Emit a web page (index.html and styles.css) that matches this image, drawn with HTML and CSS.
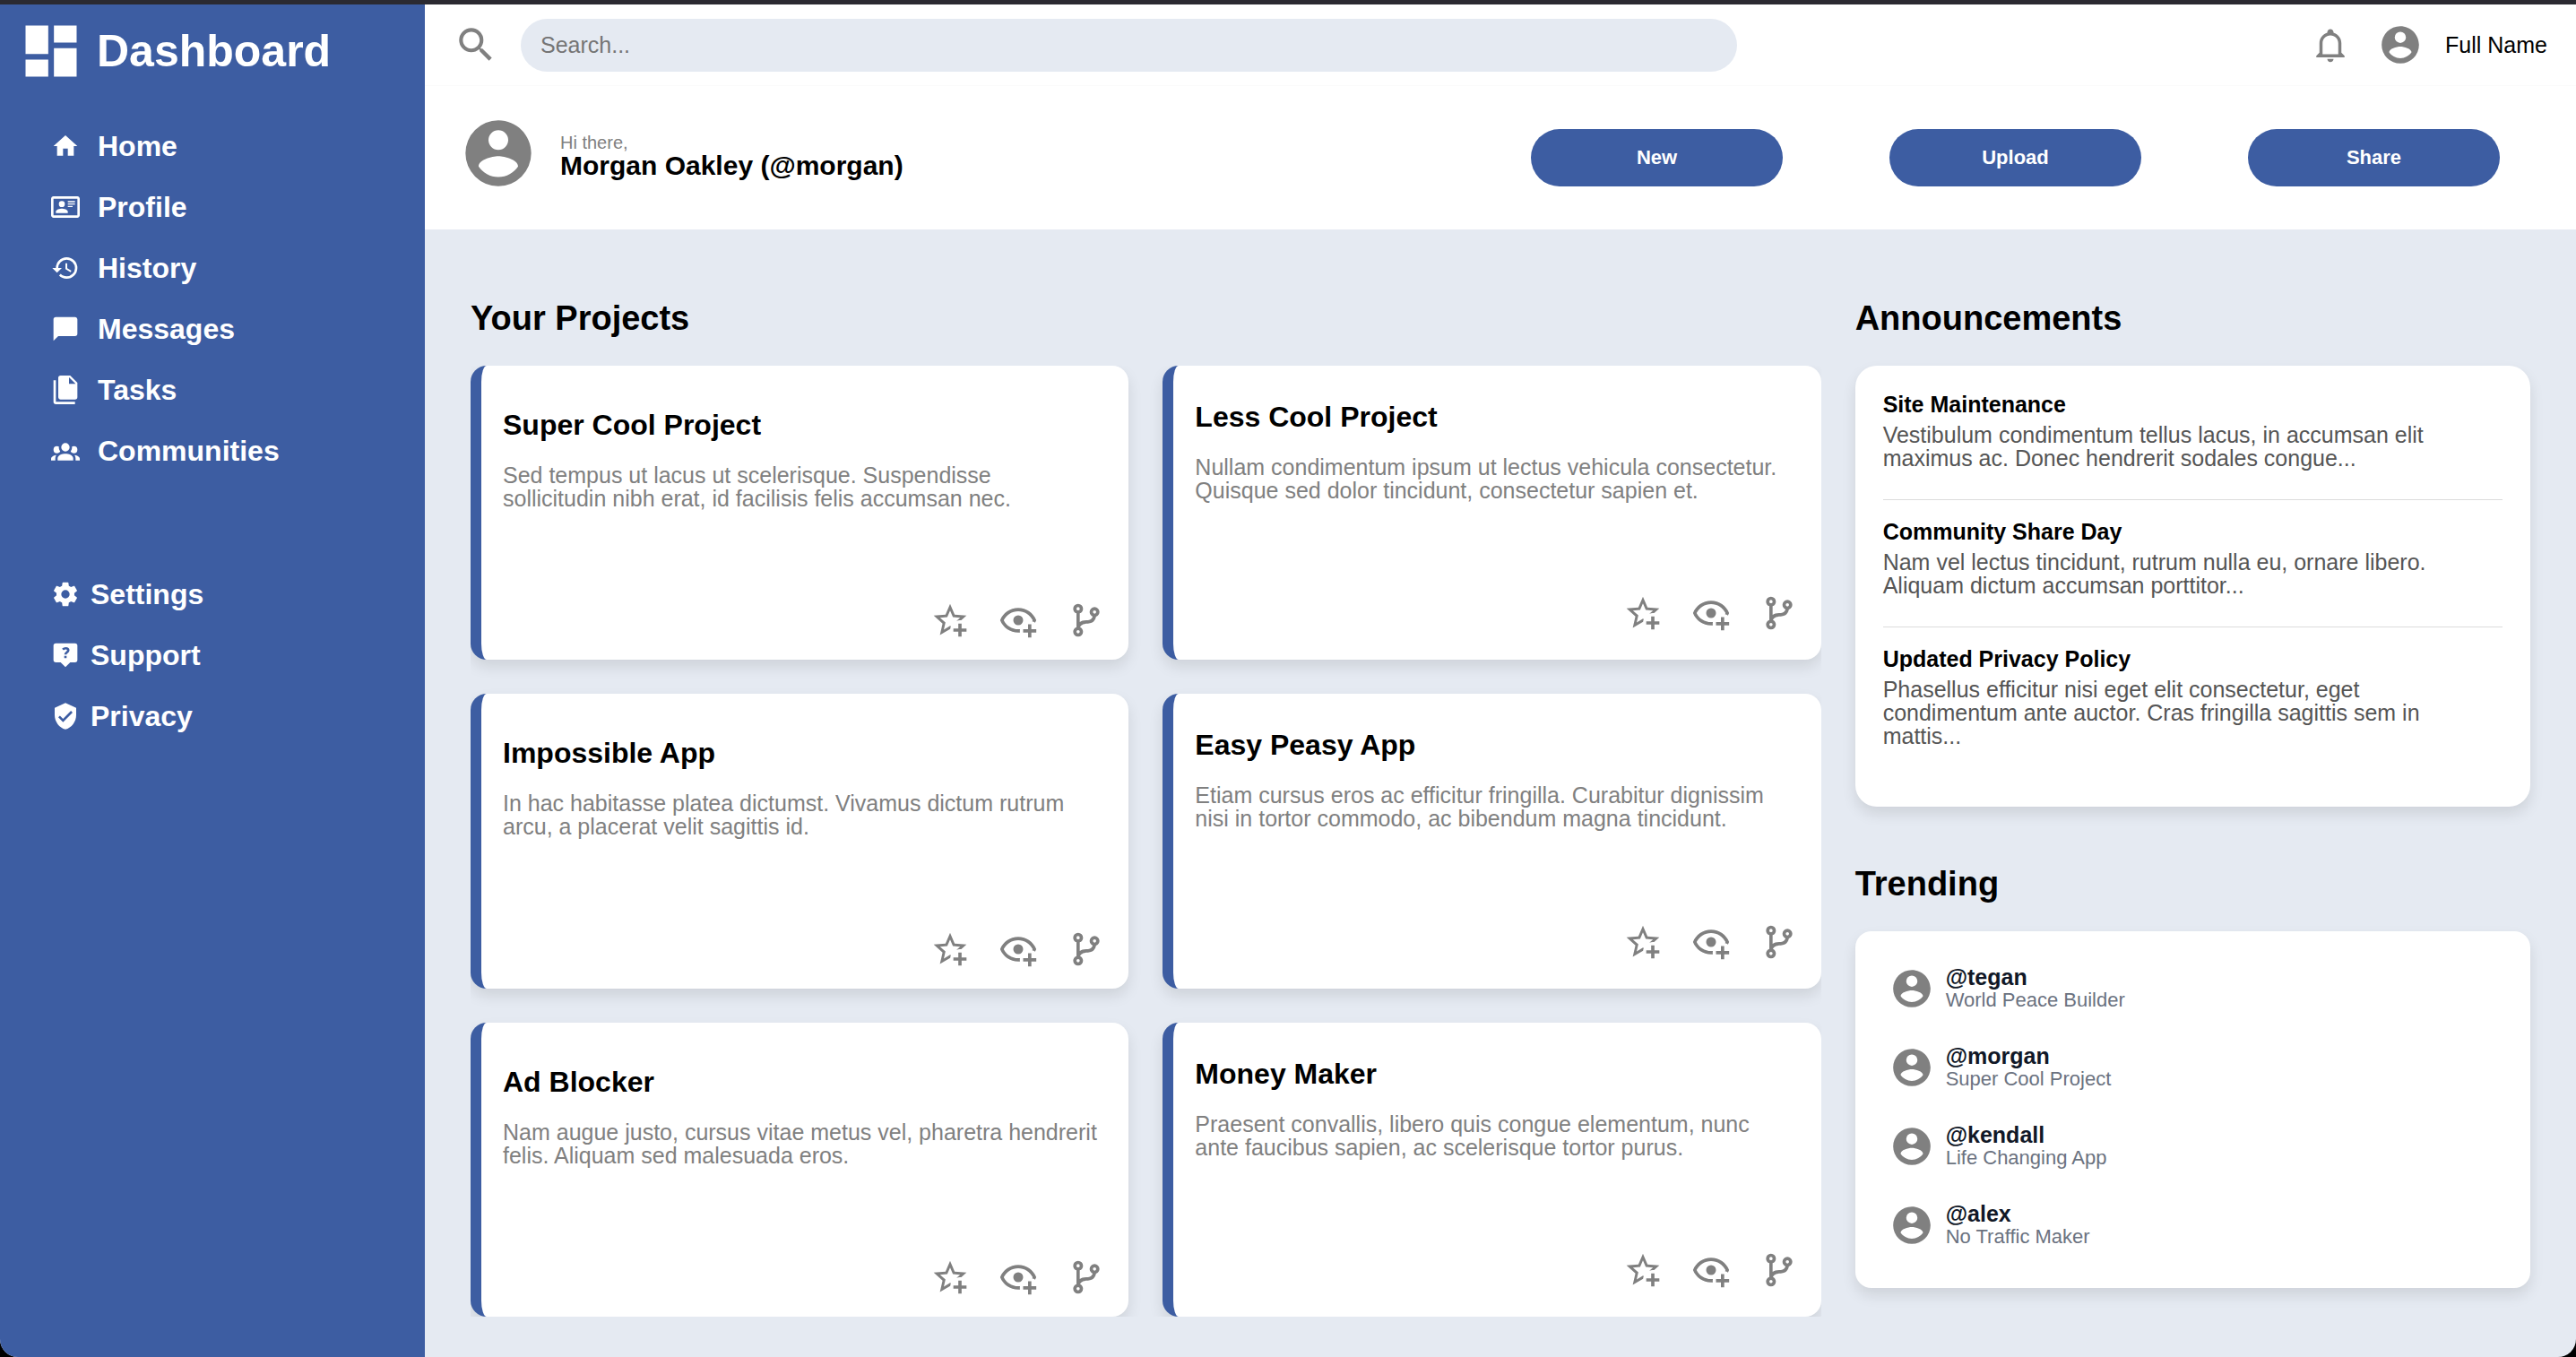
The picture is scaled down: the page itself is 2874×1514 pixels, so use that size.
FILE: index.html
```html
<!DOCTYPE html>
<html lang="en">
<head>
<meta charset="utf-8">
<meta name="viewport" content="width=device-width, initial-scale=1">
<title>Dashboard</title>
<link rel="stylesheet" href="styles.css">
</head>
<body>
<svg class="sprite" aria-hidden="true">
  <symbol id="i-account" viewBox="0 0 24 24"><path d="M12,19.2C9.5,19.2 7.29,17.92 6,16C6.03,14 10,12.9 12,12.9C14,12.9 17.97,14 18,16C16.71,17.92 14.5,19.2 12,19.2M12,5A3,3 0 0,1 15,8A3,3 0 0,1 12,11A3,3 0 0,1 9,8A3,3 0 0,1 12,5M12,2A10,10 0 0,0 2,12A10,10 0 0,0 12,22A10,10 0 0,0 22,12C22,6.47 17.5,2 12,2Z"/></symbol>
  <symbol id="i-star" viewBox="0 0 24 24"><path d="M5.8 21L7.4 14L2 9.2L9.2 8.6L12 2L14.8 8.6L22 9.2L18.8 12H18C17.3 12 16.6 12.1 15.9 12.4L18.1 10.5L13.7 10.1L12 6.1L10.3 10.1L5.9 10.5L9.2 13.4L8.2 17.7L12 15.4L12.5 15.7C12.3 16.2 12.1 16.8 12.1 17.3L5.8 21M17 14V17H14V19H17V22H19V19H22V17H19V14H17Z"/></symbol>
  <symbol id="i-eye" viewBox="0 0 24 24"><path d="M12,4.5C7,4.5 2.73,7.61 1,12C2.73,16.39 7,19.5 12,19.5C12.36,19.5 12.72,19.5 13.08,19.45C13.03,19.13 13,18.82 13,18.5C13,18.14 13.04,17.78 13.1,17.42C12.74,17.46 12.37,17.5 12,17.5C8.24,17.5 4.83,15.36 3.18,12C4.83,8.64 8.24,6.5 12,6.5C15.76,6.5 19.17,8.64 20.82,12C20.7,12.24 20.56,12.45 20.43,12.68C21.09,12.84 21.72,13.11 22.29,13.5C22.56,13 22.8,12.5 23,12C21.27,7.61 17,4.5 12,4.5M12,9A3,3 0 0,0 9,12A3,3 0 0,0 12,15A3,3 0 0,0 15,12A3,3 0 0,0 12,9M18,14.5V17.5H15V19.5H18V22.5H20V19.5H23V17.5H20V14.5H18Z"/></symbol>
  <symbol id="i-branch" viewBox="0 0 24 24"><path d="M13,14C9.64,14 8.54,15.35 8.18,16.24C9.25,16.7 10,17.76 10,19A3,3 0 0,1 7,22A3,3 0 0,1 4,19C4,17.69 4.83,16.58 6,16.17V7.83C4.83,7.42 4,6.31 4,5A3,3 0 0,1 7,2A3,3 0 0,1 10,5C10,6.31 9.17,7.42 8,7.83V13.12C8.88,12.47 10.16,12 12,12C14.67,12 15.56,10.66 15.85,9.77C14.77,9.32 14,8.25 14,7A3,3 0 0,1 17,4A3,3 0 0,1 20,7C20,8.34 19.12,9.5 17.91,9.86C17.65,11.29 16.68,14 13,14M7,18A1,1 0 0,0 6,19A1,1 0 0,0 7,20A1,1 0 0,0 8,19A1,1 0 0,0 7,18M7,4A1,1 0 0,0 6,5A1,1 0 0,0 7,6A1,1 0 0,0 8,5A1,1 0 0,0 7,4M17,6A1,1 0 0,0 16,7A1,1 0 0,0 17,8A1,1 0 0,0 18,7A1,1 0 0,0 17,6Z"/></symbol>
</svg>

<aside class="sidebar">
  <div class="brand">
    <svg class="icon icon-brand" viewBox="0 0 24 24" aria-hidden="true"><path d="M13,3V9H21V3M13,21H21V11H13M3,21H11V15H3M3,13H11V3H3V13Z"/></svg>
    <h1 class="brand-name">Dashboard</h1>
  </div>
  <nav class="nav" aria-label="Main">
    <a class="nav-link" href="#home"><svg class="icon icon-nav" viewBox="0 0 24 24" aria-hidden="true"><path d="M10,20V14H14V20H19V12H22L12,3L2,12H5V20H10Z"/></svg>Home</a>
    <a class="nav-link" href="#profile"><svg class="icon icon-nav" viewBox="0 0 24 24" aria-hidden="true"><path d="M22,3H2C0.91,3.04 0.04,3.91 0,5V19C0.04,20.09 0.91,20.96 2,21H22C23.09,20.96 23.96,20.09 24,19V5C23.96,3.91 23.09,3.04 22,3M22,19H2V5H22V19M14,17V15.75C14,14.09 10.66,13.25 9,13.25C7.34,13.25 4,14.09 4,15.75V17H14M9,7A2.5,2.5 0 0,0 6.5,9.5A2.5,2.5 0 0,0 9,12A2.5,2.5 0 0,0 11.5,9.5A2.5,2.5 0 0,0 9,7M14,7V8H20V7H14M14,9V10H20V9H14M14,11V12H18V11H14"/></svg>Profile</a>
    <a class="nav-link" href="#history"><svg class="icon icon-nav" viewBox="0 0 24 24" aria-hidden="true"><path d="M13.5,8H12V13L16.28,15.54L17,14.33L13.5,12.25V8M13,3A9,9 0 0,0 4,12H1L4.96,16.03L9,12H6A7,7 0 0,1 13,5A7,7 0 0,1 20,12A7,7 0 0,1 13,19C11.07,19 9.32,18.21 8.06,16.94L6.64,18.36C8.27,20 10.5,21 13,21A9,9 0 0,0 22,12A9,9 0 0,0 13,3"/></svg>History</a>
    <a class="nav-link" href="#messages"><svg class="icon icon-nav" viewBox="0 0 24 24" aria-hidden="true"><path d="M20,2H4A2,2 0 0,0 2,4V22L6,18H20A2,2 0 0,0 22,16V4C22,2.89 21.1,2 20,2Z"/></svg>Messages</a>
    <a class="nav-link" href="#tasks"><svg class="icon icon-nav" viewBox="0 0 24 24" aria-hidden="true"><path d="M15,7H20.5L15,1.5V7M8,0H16L22,6V18A2,2 0 0,1 20,20H8C6.89,20 6,19.1 6,18V2A2,2 0 0,1 8,0M4,4V22H20V24H4A2,2 0 0,1 2,22V4H4Z"/></svg>Tasks</a>
    <a class="nav-link" href="#communities"><svg class="icon icon-nav" viewBox="0 0 24 24" aria-hidden="true"><path d="M12,5.5A3.5,3.5 0 0,1 15.5,9A3.5,3.5 0 0,1 12,12.5A3.5,3.5 0 0,1 8.5,9A3.5,3.5 0 0,1 12,5.5M5,8C5.56,8 6.08,8.15 6.53,8.42C6.38,9.85 6.8,11.27 7.66,12.38C7.16,13.34 6.16,14 5,14A3,3 0 0,1 2,11A3,3 0 0,1 5,8M19,8A3,3 0 0,1 22,11A3,3 0 0,1 19,14C17.84,14 16.84,13.34 16.34,12.38C17.2,11.27 17.62,9.85 17.47,8.42C17.92,8.15 18.44,8 19,8M5.5,18.25C5.5,16.18 8.41,14.5 12,14.5C15.59,14.5 18.5,16.18 18.5,18.25V20H5.5V18.25M0,20V18.5C0,17.11 1.89,15.94 4.45,15.6C3.86,16.28 3.5,17.22 3.5,18.25V20H0M24,20H20.5V18.25C20.5,17.22 20.14,16.28 19.55,15.6C22.11,15.94 24,17.11 24,18.5V20Z"/></svg>Communities</a>
  </nav>
  <nav class="nav nav-secondary" aria-label="Account">
    <a class="nav-link" href="#settings"><svg class="icon icon-nav" viewBox="0 0 24 24" aria-hidden="true"><path d="M12,15.5A3.5,3.5 0 0,1 8.5,12A3.5,3.5 0 0,1 12,8.5A3.5,3.5 0 0,1 15.5,12A3.5,3.5 0 0,1 12,15.5M19.43,12.97C19.47,12.65 19.5,12.33 19.5,12C19.5,11.67 19.47,11.34 19.43,11L21.54,9.37C21.73,9.22 21.78,8.95 21.66,8.73L19.66,5.27C19.54,5.05 19.27,4.96 19.05,5.05L16.56,6.05C16.04,5.66 15.5,5.32 14.87,5.07L14.5,2.42C14.46,2.18 14.25,2 14,2H10C9.75,2 9.54,2.18 9.5,2.42L9.13,5.07C8.5,5.32 7.96,5.66 7.44,6.05L4.95,5.05C4.73,4.96 4.46,5.05 4.34,5.27L2.34,8.73C2.21,8.95 2.27,9.22 2.46,9.37L4.57,11C4.53,11.34 4.5,11.67 4.5,12C4.5,12.33 4.53,12.65 4.57,12.97L2.46,14.63C2.27,14.78 2.21,15.05 2.34,15.27L4.34,18.73C4.46,18.95 4.73,19.03 4.95,18.95L7.44,17.94C7.96,18.34 8.5,18.68 9.13,18.93L9.5,21.58C9.54,21.82 9.75,22 10,22H14C14.25,22 14.46,21.82 14.5,21.58L14.87,18.93C15.5,18.67 16.04,18.34 16.56,17.94L19.05,18.95C19.27,19.03 19.54,18.95 19.66,18.73L21.66,15.27C21.78,15.05 21.73,14.78 21.54,14.63L19.43,12.97Z"/></svg>Settings</a>
    <a class="nav-link" href="#support"><svg class="icon icon-nav" viewBox="0 0 24 24" aria-hidden="true"><path d="M4,2H20A2,2 0 0,1 22,4V16A2,2 0 0,1 20,18H16L12,22L8,18H4A2,2 0 0,1 2,16V4A2,2 0 0,1 4,2"/><path class="icon-cut" d="M9.8,7.2C10.6,6.4 11.4,6.2 12.3,6.2C13.6,6.2 14.4,6.9 14.4,7.9C14.4,9.5 12,9.6 12,11.5M12,12.6V14.4"/></svg>Support</a>
    <a class="nav-link" href="#privacy"><svg class="icon icon-nav" viewBox="0 0 24 24" aria-hidden="true"><path d="M10,17L6,13L7.41,11.59L10,14.17L16.59,7.58L18,9M12,1L3,5V11C3,16.55 6.84,21.74 12,23C17.16,21.74 21,16.55 21,11V5L12,1Z"/></svg>Privacy</a>
  </nav>
</aside>

<div class="page">
  <header class="topbar">
    <form class="search" role="search">
      <label class="search-label" for="search" aria-label="Search"><svg class="icon icon-search" viewBox="0 0 24 24" aria-hidden="true"><path d="M9.5,3A6.5,6.5 0 0,1 16,9.5C16,11.11 15.41,12.59 14.44,13.73L14.71,14H15.5L20.5,19L19,20.5L14,15.5V14.71L13.73,14.44C12.59,15.41 11.11,16 9.5,16A6.5,6.5 0 0,1 3,9.5A6.5,6.5 0 0,1 9.5,3M9.5,5C7,5 5,7 5,9.5C5,12 7,14 9.5,14C12,14 14,12 14,9.5C14,7 12,5 9.5,5Z"/></svg></label>
      <input class="search-input" id="search" type="search" placeholder="Search...">
    </form>
    <div class="account">
      <button class="icon-button" type="button" aria-label="Notifications"><svg class="icon icon-bell" viewBox="0 0 24 24" aria-hidden="true"><path d="M10 21H14C14 22.1 13.1 23 12 23S10 22.1 10 21M21 19V20H3V19L5 17V11C5 7.9 7 5.2 10 4.3V4C10 2.9 10.9 2 12 2S14 2.9 14 4V4.3C17 5.2 19 7.9 19 11V17L21 19M17 11C17 8.2 14.8 6 12 6S7 8.2 7 11V18H17V11Z"/></svg></button>
      <a class="account-link" href="#account"><svg class="icon icon-user" aria-hidden="true"><use href="#i-account"/></svg>Full Name</a>
    </div>
  </header>

  <section class="welcome">
    <div class="greeting">
      <svg class="icon icon-avatar" aria-hidden="true"><use href="#i-account"/></svg>
      <div class="greeting-text">
        <p class="greeting-hi">Hi there,</p>
        <p class="greeting-name">Morgan Oakley (@morgan)</p>
      </div>
    </div>
    <div class="actions">
      <button class="action" type="button">New</button>
      <button class="action" type="button">Upload</button>
      <button class="action" type="button">Share</button>
    </div>
  </section>

  <main class="content">
    <section class="projects">
      <h2 class="heading">Your Projects</h2>
      <div class="project-grid">
        <article class="project">
          <h3 class="project-title">Super Cool Project</h3>
          <p class="project-text">Sed tempus ut lacus ut scelerisque. Suspendisse sollicitudin nibh erat, id facilisis felis accumsan nec.</p>
          <div class="project-tools">
            <button class="icon-button" type="button" aria-label="Star"><svg class="icon icon-tool"><use href="#i-star"/></svg></button>
            <button class="icon-button" type="button" aria-label="Watch"><svg class="icon icon-tool"><use href="#i-eye"/></svg></button>
            <button class="icon-button" type="button" aria-label="Fork"><svg class="icon icon-tool"><use href="#i-branch"/></svg></button>
          </div>
        </article>
        <article class="project">
          <h3 class="project-title">Less Cool Project</h3>
          <p class="project-text">Nullam condimentum ipsum ut lectus vehicula consectetur. Quisque sed dolor tincidunt, consectetur sapien et.</p>
          <div class="project-tools">
            <button class="icon-button" type="button" aria-label="Star"><svg class="icon icon-tool"><use href="#i-star"/></svg></button>
            <button class="icon-button" type="button" aria-label="Watch"><svg class="icon icon-tool"><use href="#i-eye"/></svg></button>
            <button class="icon-button" type="button" aria-label="Fork"><svg class="icon icon-tool"><use href="#i-branch"/></svg></button>
          </div>
        </article>
        <article class="project">
          <h3 class="project-title">Impossible App</h3>
          <p class="project-text">In hac habitasse platea dictumst. Vivamus dictum rutrum arcu, a placerat velit sagittis id.</p>
          <div class="project-tools">
            <button class="icon-button" type="button" aria-label="Star"><svg class="icon icon-tool"><use href="#i-star"/></svg></button>
            <button class="icon-button" type="button" aria-label="Watch"><svg class="icon icon-tool"><use href="#i-eye"/></svg></button>
            <button class="icon-button" type="button" aria-label="Fork"><svg class="icon icon-tool"><use href="#i-branch"/></svg></button>
          </div>
        </article>
        <article class="project">
          <h3 class="project-title">Easy Peasy App</h3>
          <p class="project-text">Etiam cursus eros ac efficitur fringilla. Curabitur dignissim nisi in tortor commodo, ac bibendum magna tincidunt.</p>
          <div class="project-tools">
            <button class="icon-button" type="button" aria-label="Star"><svg class="icon icon-tool"><use href="#i-star"/></svg></button>
            <button class="icon-button" type="button" aria-label="Watch"><svg class="icon icon-tool"><use href="#i-eye"/></svg></button>
            <button class="icon-button" type="button" aria-label="Fork"><svg class="icon icon-tool"><use href="#i-branch"/></svg></button>
          </div>
        </article>
        <article class="project">
          <h3 class="project-title">Ad Blocker</h3>
          <p class="project-text">Nam augue justo, cursus vitae metus vel, pharetra hendrerit felis. Aliquam sed malesuada eros.</p>
          <div class="project-tools">
            <button class="icon-button" type="button" aria-label="Star"><svg class="icon icon-tool"><use href="#i-star"/></svg></button>
            <button class="icon-button" type="button" aria-label="Watch"><svg class="icon icon-tool"><use href="#i-eye"/></svg></button>
            <button class="icon-button" type="button" aria-label="Fork"><svg class="icon icon-tool"><use href="#i-branch"/></svg></button>
          </div>
        </article>
        <article class="project">
          <h3 class="project-title">Money Maker</h3>
          <p class="project-text">Praesent convallis, libero quis congue elementum, nunc ante faucibus sapien, ac scelerisque tortor purus.</p>
          <div class="project-tools">
            <button class="icon-button" type="button" aria-label="Star"><svg class="icon icon-tool"><use href="#i-star"/></svg></button>
            <button class="icon-button" type="button" aria-label="Watch"><svg class="icon icon-tool"><use href="#i-eye"/></svg></button>
            <button class="icon-button" type="button" aria-label="Fork"><svg class="icon icon-tool"><use href="#i-branch"/></svg></button>
          </div>
        </article>
      </div>
    </section>

    <div class="side">
      <section>
        <h2 class="heading">Announcements</h2>
        <div class="card announcements">
          <article class="announcement">
            <h3 class="announcement-title">Site Maintenance</h3>
            <p class="announcement-text">Vestibulum condimentum tellus lacus, in accumsan elit maximus ac. Donec hendrerit sodales congue...</p>
          </article>
          <article class="announcement">
            <h3 class="announcement-title">Community Share Day</h3>
            <p class="announcement-text">Nam vel lectus tincidunt, rutrum nulla eu, ornare libero. Aliquam dictum accumsan porttitor...</p>
          </article>
          <article class="announcement">
            <h3 class="announcement-title">Updated Privacy Policy</h3>
            <p class="announcement-text">Phasellus efficitur nisi eget elit consectetur, eget condimentum ante auctor. Cras fringilla sagittis sem in mattis...</p>
          </article>
        </div>
      </section>
      <section>
        <h2 class="heading">Trending</h2>
        <ul class="card trending">
          <li class="trend"><svg class="icon icon-user" aria-hidden="true"><use href="#i-account"/></svg><div><p class="trend-user">@tegan</p><p class="trend-project">World Peace Builder</p></div></li>
          <li class="trend"><svg class="icon icon-user" aria-hidden="true"><use href="#i-account"/></svg><div><p class="trend-user">@morgan</p><p class="trend-project">Super Cool Project</p></div></li>
          <li class="trend"><svg class="icon icon-user" aria-hidden="true"><use href="#i-account"/></svg><div><p class="trend-user">@kendall</p><p class="trend-project">Life Changing App</p></div></li>
          <li class="trend"><svg class="icon icon-user" aria-hidden="true"><use href="#i-account"/></svg><div><p class="trend-user">@alex</p><p class="trend-project">No Traffic Maker</p></div></li>
        </ul>
      </section>
    </div>
  </main>
</div>
</body>
</html>
```

FILE: styles.css
```css
:root {
  --blue: #3d5da2;
  --mist: #e5eaf2;
  --gray: #808080;
  --shadow: 0 8px 16px rgba(0, 0, 0, 0.1);
}

* {
  box-sizing: border-box;
  margin: 0;
  padding: 0;
}

html {
  background: #000;
}

body {
  display: grid;
  grid-template-columns: 474px 1fr;
  min-height: 100vh;
  border-top: 5px solid #2b2a31;
  border-radius: 0 0 20px 20px;
  overflow: hidden;
  background: var(--mist);
  color: #000;
  font-family: "Liberation Sans", Helvetica, Arial, sans-serif;
  font-size: 25px;
  line-height: 26px;
}

a {
  color: inherit;
  text-decoration: none;
}

button,
input {
  border: 0;
  font: inherit;
}

.sprite {
  position: absolute;
  width: 0;
  height: 0;
}

/* Icons */

.icon {
  display: block;
  flex: none;
  fill: currentColor;
}

.icon-brand {
  width: 76px;
  height: 76px;
}

.icon-nav {
  width: 32px;
  height: 32px;
}

.icon-cut {
  fill: none;
  stroke: var(--blue);
  stroke-width: 2;
}

.icon-search,
.icon-user {
  width: 50px;
  height: 50px;
  color: var(--gray);
}

.icon-bell {
  width: 42px;
  height: 42px;
}

.icon-avatar {
  width: 88px;
  height: 88px;
  color: var(--gray);
}

.icon-tool {
  width: 44px;
  height: 44px;
}

.icon-button {
  background: none;
  color: var(--gray);
  cursor: pointer;
}

/* Sidebar */

.sidebar {
  background: var(--blue);
  color: #fff;
  font-weight: bold;
}

.brand {
  display: flex;
  align-items: center;
  gap: 13px;
  height: 103px;
  padding-left: 19px;
}

.brand-name {
  font-size: 50px;
  line-height: 60px;
}

.nav {
  display: flex;
  flex-direction: column;
  padding: 21px 0 0 57px;
  font-size: 32px;
}

.nav-link {
  display: flex;
  align-items: center;
  gap: 20px;
  height: 68px;
}

.nav-secondary {
  padding-top: 92px;
}

.nav-secondary .nav-link {
  gap: 12px;
}

/* Header */

.page {
  display: flex;
  flex-direction: column;
  min-width: 0;
}

.topbar {
  display: flex;
  align-items: center;
  justify-content: space-between;
  height: 91px;
  padding: 0 32px;
  border-bottom: 1px solid #fbfbfb;
  background: #fff;
}

.search {
  display: flex;
  flex: 0 1 1432px;
  align-items: center;
  gap: 25px;
}

.search-input {
  flex: 1;
  min-width: 0;
  height: 59px;
  padding: 0 22px;
  border-radius: 30px;
  background: var(--mist);
}

.search-input::placeholder {
  color: #757575;
}

.account,
.account-link {
  display: flex;
  align-items: center;
}

.account {
  gap: 32px;
}

.account-link {
  gap: 25px;
}

.welcome {
  display: flex;
  justify-content: space-between;
  height: 160px;
  padding: 31px 85px 0 38px;
  background: #fff;
}

.greeting {
  display: flex;
  gap: 25px;
}

.greeting-text {
  padding-top: 22px;
}

.greeting-hi {
  color: var(--gray);
  font-size: 20px;
  line-height: 20px;
}

.greeting-name {
  font-size: 30px;
  font-weight: bold;
  line-height: 32px;
}

.actions {
  display: grid;
  grid-template-columns: repeat(3, 1fr);
  gap: 119px;
  width: 1081px;
  padding-top: 17px;
}

.action {
  height: 64px;
  border-radius: 32px;
  background: var(--blue);
  color: #fff;
  font-size: 22px;
  font-weight: bold;
  cursor: pointer;
}

/* Content */

.content {
  display: grid;
  flex: 1;
  grid-template-columns: 2fr 1fr;
  gap: 38px;
  padding: 77px 51px 45px;
}

.heading {
  margin-bottom: 31px;
  font-size: 38px;
  line-height: 44px;
}

.projects {
  display: flex;
  flex-direction: column;
}

.project-grid {
  display: grid;
  flex: 1;
  grid-template-columns: 1fr 1fr;
  grid-auto-rows: 1fr;
  gap: 38px;
  overflow: hidden;
}

.project {
  display: flex;
  flex-direction: column;
  padding: 48px 25px 22px 24px;
  border-left: 12px solid var(--blue);
  border-radius: 18px;
  background: #fff;
  box-shadow: var(--shadow);
}

.project:nth-child(even) {
  padding-top: 39px;
  padding-bottom: 30px;
}

.project-title {
  margin-bottom: 25px;
  font-size: 32px;
  line-height: 36px;
}

.project-text {
  padding-right: 8px;
  color: var(--gray);
}

.project-tools {
  display: flex;
  justify-content: flex-end;
  gap: 32px;
  margin-top: auto;
}

.side {
  display: flex;
  flex-direction: column;
  gap: 64px;
}

.card {
  border-radius: 18px;
  background: #fff;
  box-shadow: var(--shadow);
}

.announcements {
  display: flex;
  flex-direction: column;
  gap: 21px;
  padding: 29px 31px 33px;
  border-radius: 24px;
}

.announcement {
  padding-bottom: 33px;
}

.announcement:not(:last-child) {
  border-bottom: 1px solid #dcdcdc;
}

.announcement-title {
  margin-bottom: 7px;
  font-size: 25px;
  line-height: 28px;
}

.announcement-text {
  padding-right: 31px;
  color: #555;
}

.trending {
  display: flex;
  flex-direction: column;
  gap: 36px;
  padding: 38px 38px 44px;
  list-style: none;
}

.trend {
  display: flex;
  align-items: center;
  gap: 13px;
}

.trend-user {
  color: #111827;
  font-weight: bold;
}

.trend-project {
  color: #6b7280;
  font-size: 22px;
  line-height: 26px;
}
```
